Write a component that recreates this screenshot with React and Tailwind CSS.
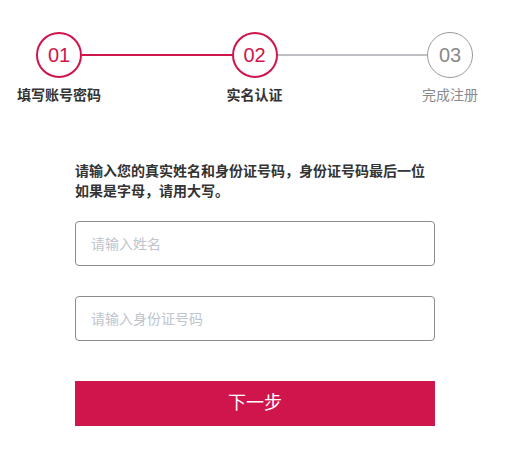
import React from "react";

const STEPS = [
  { num: "01", label: "填写账号密码", state: "done" },
  { num: "02", label: "实名认证", state: "active" },
  { num: "03", label: "完成注册", state: "todo" },
];

function StepCircle({ step }) {
  const on = step.state !== "todo";
  return (
    <div
      className={
        on
          ? "flex h-[46px] w-[46px] shrink-0 items-center justify-center rounded-full border-2 border-[#d0154c] text-[20px] text-[#d0154c]"
          : "flex h-[46px] w-[46px] shrink-0 items-center justify-center rounded-full border border-[#9a9a9a] text-[20px] text-[#8a8a8a]"
      }
    >
      {step.num}
    </div>
  );
}

export default function App() {
  return (
    <div
      className="min-h-[459px] w-full bg-white"
      style={{ fontFamily: '"Liberation Sans", "Noto Sans CJK SC", sans-serif' }}
    >
      {/* steps */}
      <div className="pt-[32px]">
        <div className="flex items-center pl-[36px] pr-[37px]">
          <StepCircle step={STEPS[0]} />
          <div className="h-[2px] flex-1 bg-[#d0154c]" />
          <StepCircle step={STEPS[1]} />
          <div className="h-[2px] flex-1 bg-[#bfbfc4]" />
          <StepCircle step={STEPS[2]} />
        </div>
        <div className="mt-[8px] flex justify-between pl-[9px] pr-[10px]">
          {STEPS.map((s) => (
            <div
              key={s.num}
              className={
                s.state === "todo"
                  ? "w-[100px] text-center text-[14px] leading-[18px] text-[#8a8a8a]"
                  : "w-[100px] text-center text-[14px] font-bold leading-[18px] text-[#333]"
              }
            >
              {s.label}
            </div>
          ))}
        </div>
      </div>

      {/* form */}
      <div className="mx-auto mt-[57px] w-[360px]">
        <p className="text-[14px] font-bold leading-[20px] text-[#333]">
          请输入您的真实姓名和身份证号码，身份证号码最后一位
          <br />
          如果是字母，请用大写。
        </p>
        <input
          className="mt-[20px] block h-[45px] w-full rounded-[4px] border border-[#8c8c8c] px-[15px] text-[14px] text-[#333] outline-none placeholder:text-[#c0c4cc]"
          placeholder="请输入姓名"
        />
        <input
          className="mt-[30px] block h-[45px] w-full rounded-[4px] border border-[#8c8c8c] px-[15px] text-[14px] text-[#333] outline-none placeholder:text-[#c0c4cc]"
          placeholder="请输入身份证号码"
        />
        <button className="mt-[40px] block h-[45px] w-full bg-[#d0154c] text-[18px] text-white">
          下一步
        </button>
      </div>
    </div>
  );
}
